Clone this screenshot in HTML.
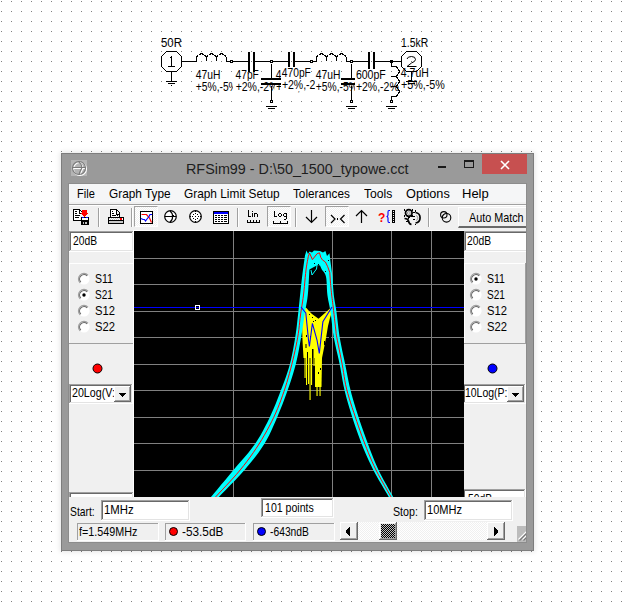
<!DOCTYPE html>
<html><head><meta charset="utf-8">
<style>
html,body{margin:0;padding:0;width:631px;height:610px;overflow:hidden;background:#fff;}
body{position:relative;font-family:"Liberation Sans",sans-serif;}
.a{position:absolute;}
.t{position:absolute;white-space:nowrap;line-height:1;}
svg.a{overflow:visible;}
</style></head><body>
<svg class="a" style="left:0;top:0" width="631" height="610"><defs><pattern id="dp" x="0" y="0" width="10" height="10" patternUnits="userSpaceOnUse"><rect x="1" y="1" width="1" height="1" fill="#808080"/></pattern></defs><rect x="0" y="0" width="631" height="610" fill="url(#dp)"/></svg>
<div class="t" id="s_50r" style="left:161px;top:36.84px;font-size:12px;color:#000;font-family:'Liberation Sans',sans-serif;transform:scaleX(0.9500);transform-origin:0 0;">50R</div>
<svg class="a" style="left:0;top:0" width="631" height="120" shape-rendering="crispEdges"><polyline points="166.5,51.5 176.5,51.5 181.5,56.5 181.5,66.5 176.5,71.5 166.5,71.5 161.5,66.5 161.5,56.5 166.5,51.5" fill="none" stroke="#000" stroke-width="1"/><polyline points="169.5,58.5 170.5,57.5 171.5,56.5 171.5,66.5" fill="none" stroke="#000" stroke-width="1"/><rect x="168" y="66" width="7" height="1" fill="#000"/><polyline points="171.5,71.5 171.5,81.5" fill="none" stroke="#000" stroke-width="1"/><rect x="166" y="81" width="11" height="1" fill="#000"/><rect x="168" y="83" width="7" height="1" fill="#000"/><rect x="171" y="85" width="1" height="1" fill="#000"/><polyline points="181.5,61.5 196.5,61.5" fill="none" stroke="#000" stroke-width="1"/><polyline points="191.5,61.5 196.5,61.5 196.5,56.5 198.5,55.5 199.5,54.5 201.5,53.5 203.5,54.5 204.5,55.5 206.5,56.5 208.5,55.5 209.5,54.5 211.5,53.5 213.5,54.5 214.5,55.5 216.5,56.5 218.5,55.5 219.5,54.5 221.5,53.5 223.5,54.5 224.5,55.5 226.5,56.5" fill="none" stroke="#000" stroke-width="1"/><polyline points="226.5,56.5 226.5,61.5 231.5,61.5" fill="none" stroke="#000" stroke-width="1"/><rect x="206" y="56" width="1" height="5" fill="#000"/><rect x="216" y="56" width="1" height="5" fill="#000"/><rect x="230" y="60" width="3" height="3" fill="#000"/><rect x="231" y="61" width="1" height="1" fill="#fff"/><polyline points="231.5,61.5 248.5,61.5" fill="none" stroke="#000" stroke-width="1"/><polyline points="254.5,61.5 271.5,61.5" fill="none" stroke="#000" stroke-width="1"/><rect x="270" y="60" width="3" height="3" fill="#000"/><rect x="271" y="61" width="1" height="1" fill="#fff"/></svg>
<div class="t" id="s_l1a" style="left:195px;top:68.84px;font-size:12px;color:#000;font-family:'Liberation Sans',sans-serif;background:#fff;transform:scaleX(0.8571);transform-origin:0 0;padding-left:1px;">47uH</div>
<div class="t" id="s_l1b" style="left:195px;top:80.84px;font-size:12px;color:#000;font-family:'Liberation Sans',sans-serif;background:#fff;transform:scaleX(0.8542);transform-origin:0 0;padding-left:1px;">+5%,-5%</div>
<div class="t" id="s_c1a" style="left:233px;top:68.84px;font-size:12px;color:#000;font-family:'Liberation Sans',sans-serif;background:#fff;transform:scaleX(0.8519);transform-origin:0 0;padding-left:3px;">47pF</div>
<div class="t" id="s_c1b" style="left:233px;top:80.84px;font-size:12px;color:#000;font-family:'Liberation Sans',sans-serif;background:#fff;transform:scaleX(0.8750);transform-origin:0 0;padding-left:3px;">+2%,-2%</div>
<svg class="a" style="left:0;top:0" width="631" height="120" shape-rendering="crispEdges"><rect x="248" y="52" width="2" height="20" fill="#000"/><rect x="253" y="52" width="2" height="20" fill="#000"/></svg>
<svg class="a" style="left:0;top:0" width="631" height="120" shape-rendering="crispEdges"><polyline points="271.5,61.5 288.5,61.5" fill="none" stroke="#000" stroke-width="1"/><rect x="288" y="52" width="2" height="20" fill="#000"/><rect x="293" y="52" width="2" height="20" fill="#000"/><polyline points="294.5,61.5 311.5,61.5" fill="none" stroke="#000" stroke-width="1"/><rect x="310" y="60" width="3" height="3" fill="#000"/><rect x="311" y="61" width="1" height="1" fill="#fff"/></svg>
<div class="t" id="s_c3a" style="left:275px;top:68.84px;font-size:12px;color:#000;font-family:'Liberation Sans',sans-serif;background:#fff;transform:scaleX(0.8529);transform-origin:0 0;padding-left:1px;">470pF</div>
<div class="t" id="s_c3b" style="left:275px;top:80.84px;font-size:12px;color:#000;font-family:'Liberation Sans',sans-serif;background:#fff;transform:scaleX(0.8750);transform-origin:0 0;padding-left:1px;">+2%,-2%</div>
<svg class="a" style="left:0;top:0" width="631" height="120" shape-rendering="crispEdges"><polyline points="271.5,63.5 271.5,78.5" fill="none" stroke="#000" stroke-width="1"/><polyline points="271.5,85.5 271.5,101.5" fill="none" stroke="#000" stroke-width="1"/><rect x="270" y="100" width="3" height="3" fill="#000"/><rect x="271" y="101" width="1" height="1" fill="#fff"/><rect x="270" y="60" width="3" height="3" fill="#000"/><rect x="271" y="61" width="1" height="1" fill="#fff"/><rect x="266" y="106" width="11" height="1" fill="#000"/><rect x="268" y="108" width="7" height="1" fill="#000"/><rect x="261" y="83" width="20" height="2" fill="#000"/></svg>
<div class="t" id="s_c2a" style="left:281px;top:66.84px;font-size:12px;color:#000;font-family:'Liberation Sans',sans-serif;background:#fff;transform:scaleX(0.8529);transform-origin:0 0;padding-left:1px;">470pF</div>
<div class="t" id="s_c2b" style="left:281px;top:78.84px;font-size:12px;color:#000;font-family:'Liberation Sans',sans-serif;background:#fff;transform:scaleX(0.8750);transform-origin:0 0;padding-left:1px;">+2%,-2%</div>
<svg class="a" style="left:0;top:0" width="631" height="120" shape-rendering="crispEdges"><rect x="261" y="78" width="20" height="2" fill="#000"/></svg>
<svg class="a" style="left:0;top:0" width="631" height="120" shape-rendering="crispEdges"><polyline points="311.5,61.5 316.5,61.5 316.5,56.5 318.5,55.5 319.5,54.5 321.5,53.5 323.5,54.5 324.5,55.5 326.5,56.5 328.5,55.5 329.5,54.5 331.5,53.5 333.5,54.5 334.5,55.5 336.5,56.5 338.5,55.5 339.5,54.5 341.5,53.5 343.5,54.5 344.5,55.5 346.5,56.5" fill="none" stroke="#000" stroke-width="1"/><polyline points="346.5,56.5 346.5,61.5 351.5,61.5" fill="none" stroke="#000" stroke-width="1"/><rect x="326" y="56" width="1" height="5" fill="#000"/><rect x="336" y="56" width="1" height="5" fill="#000"/><rect x="310" y="60" width="3" height="3" fill="#000"/><rect x="311" y="61" width="1" height="1" fill="#fff"/><rect x="350" y="60" width="3" height="3" fill="#000"/><rect x="351" y="61" width="1" height="1" fill="#fff"/></svg>
<div class="t" id="s_l2a" style="left:315px;top:68.84px;font-size:12px;color:#000;font-family:'Liberation Sans',sans-serif;background:#fff;transform:scaleX(0.8571);transform-origin:0 0;padding-left:1px;">47uH</div>
<div class="t" id="s_l2b" style="left:315px;top:80.84px;font-size:12px;color:#000;font-family:'Liberation Sans',sans-serif;background:#fff;transform:scaleX(0.8542);transform-origin:0 0;padding-left:1px;">+5%,-5%</div>
<svg class="a" style="left:0;top:0" width="631" height="120" shape-rendering="crispEdges"><polyline points="351.5,63.5 351.5,78.5" fill="none" stroke="#000" stroke-width="1"/><rect x="341" y="78" width="20" height="2" fill="#000"/><rect x="341" y="83" width="20" height="2" fill="#000"/><polyline points="351.5,85.5 351.5,101.5" fill="none" stroke="#000" stroke-width="1"/><rect x="350" y="100" width="3" height="3" fill="#000"/><rect x="351" y="101" width="1" height="1" fill="#fff"/><rect x="350" y="60" width="3" height="3" fill="#000"/><rect x="351" y="61" width="1" height="1" fill="#fff"/><rect x="346" y="106" width="11" height="1" fill="#000"/><rect x="348" y="108" width="7" height="1" fill="#000"/></svg>
<svg class="a" style="left:0;top:0" width="631" height="120" shape-rendering="crispEdges"><polyline points="351.5,61.5 368.5,61.5" fill="none" stroke="#000" stroke-width="1"/><rect x="368" y="52" width="2" height="20" fill="#000"/><rect x="373" y="52" width="2" height="20" fill="#000"/><polyline points="374.5,61.5 401.5,61.5" fill="none" stroke="#000" stroke-width="1"/></svg>
<div class="t" id="s_c5a" style="left:355px;top:68.84px;font-size:12px;color:#000;font-family:'Liberation Sans',sans-serif;background:#fff;transform:scaleX(0.8788);transform-origin:0 0;padding-left:1px;">600pF</div>
<div class="t" id="s_c5b" style="left:355px;top:80.84px;font-size:12px;color:#000;font-family:'Liberation Sans',sans-serif;background:#fff;transform:scaleX(0.8750);transform-origin:0 0;padding-left:1px;">+2%,-2%</div>
<div class="t" id="s_l3a" style="left:400px;top:66.84px;font-size:12px;color:#000;font-family:'Liberation Sans',sans-serif;background:#fff;transform:scaleX(0.8710);transform-origin:0 0;padding-left:1px;">4.7uH</div>
<div class="t" id="s_l3b" style="left:400px;top:78.84px;font-size:12px;color:#000;font-family:'Liberation Sans',sans-serif;background:#fff;transform:scaleX(0.8958);transform-origin:0 0;padding-left:1px;">+5%,-5%</div>
<svg class="a" style="left:0;top:0" width="631" height="120" shape-rendering="crispEdges"><polyline points="391.5,61.5 391.5,66.5 396.5,66.5 397.5,68.5 398.5,69.5 399.5,71.5 398.5,73.5 397.5,74.5 396.5,76.5 397.5,78.5 398.5,79.5 399.5,81.5 398.5,83.5 397.5,84.5 396.5,86.5 397.5,88.5 398.5,89.5 399.5,91.5 398.5,93.5 397.5,94.5 396.5,96.5" fill="none" stroke="#000" stroke-width="1"/><polyline points="396.5,96.5 391.5,96.5 391.5,101.5" fill="none" stroke="#000" stroke-width="1"/><rect x="391" y="76" width="5" height="1" fill="#000"/><rect x="391" y="86" width="5" height="1" fill="#000"/><rect x="390" y="60" width="3" height="3" fill="#000"/><rect x="390" y="100" width="3" height="3" fill="#000"/><rect x="391" y="101" width="1" height="1" fill="#fff"/><rect x="386" y="106" width="11" height="1" fill="#000"/><rect x="388" y="108" width="7" height="1" fill="#000"/></svg>
<div class="t" id="s_15k" style="left:401px;top:36.84px;font-size:12px;color:#000;font-family:'Liberation Sans',sans-serif;transform:scaleX(0.8667);transform-origin:0 0;">1.5kR</div>
<svg class="a" style="left:0;top:0" width="631" height="120" shape-rendering="crispEdges"><polyline points="406.5,51.5 416.5,51.5 421.5,56.5 421.5,66.5 416.5,71.5 406.5,71.5 401.5,66.5 401.5,56.5 406.5,51.5" fill="none" stroke="#000" stroke-width="1"/><path d="M407 59 Q407.5 56.5 411.5 56.5 Q415.5 56.5 415.5 59.5 Q415.5 61.5 411.5 63 L407 66.5 H416.5" fill="none" stroke="#000" stroke-width="1" shape-rendering="auto"/><polyline points="411.5,71.5 411.5,81.5" fill="none" stroke="#000" stroke-width="1"/><rect x="406" y="81" width="11" height="1" fill="#000"/><rect x="408" y="83" width="7" height="1" fill="#000"/></svg>
<div class="a" style="left:61px;top:153px;width:473px;height:398px;box-sizing:border-box;background:#9a9a9a;border:1px solid #7d7d7d;box-shadow:0 0 5px 1px rgba(0,0,0,0.10);"></div>
<svg class="a" style="left:71px;top:160px" width="16" height="16">
<rect x="0" y="0" width="16" height="16" fill="#b4b4b4"/>
<g transform="translate(1,1)" fill="none" stroke="#fff" stroke-width="1.1">
<circle cx="8" cy="8" r="6.5"/><path d="M1.5 7.5 H14.5 M7.5 1.5 Q10.5 4 11 7.5 Q9 11 8 14.5"/></g>
<g fill="none" stroke="#7a7a7a" stroke-width="1.1">
<circle cx="8" cy="8" r="6.5"/><path d="M1.5 7.5 H14.5 M7.5 1.5 Q10.5 4 11 7.5 Q9 11 8 14.5"/></g>
</svg>
<div class="t" id="title" style="left:186px;top:161.30px;font-size:15px;color:#1e1e1e;font-family:'Liberation Sans',sans-serif;transform:scaleX(0.9569);transform-origin:0 0;">RFSim99 - D:\50_1500_typowe.cct</div>
<div class="a" style="left:438px;top:166px;width:8px;height:2px;background:#1a1a1a;"></div>
<div class="a" style="left:464px;top:160px;width:10px;height:8px;box-sizing:border-box;border:1px solid #1a1a1a;border-top-width:2px;"></div>
<div class="a" style="left:482px;top:154px;width:45px;height:20px;background:#c75050;"></div>
<svg class="a" style="left:482px;top:154px" width="45" height="20"><path d="M19 7 L27 15 M27 7 L19 15" stroke="#fff" stroke-width="1.6"/></svg>
<div class="a" style="left:68px;top:183px;width:459px;height:360px;background:#8c8c8c;"></div>
<div class="a" style="left:0;top:0;width:631px;height:610px;clip-path:inset(184px 105px 68px 69px)">
<div class="a" style="left:69px;top:184px;width:457px;height:358px;background:#f0f0f0;"></div>
<div class="a" style="left:69px;top:184px;width:457px;height:18px;background:#f5f6f7;"></div>
<div class="a" style="left:69px;top:204px;width:457px;height:1px;background:#a0a0a0;"></div>
<div class="a" style="left:69px;top:205px;width:457px;height:1px;background:#ffffff;"></div>
<div class="t" id="m_file" style="left:77px;top:187.00px;font-size:13px;color:#000;font-family:'Liberation Sans',sans-serif;transform:scaleX(0.8500);transform-origin:0 0;">File</div>
<div class="t" id="m_gt" style="left:109px;top:187.00px;font-size:13px;color:#000;font-family:'Liberation Sans',sans-serif;transform:scaleX(0.9091);transform-origin:0 0;">Graph Type</div>
<div class="t" id="m_gls" style="left:184px;top:187.00px;font-size:13px;color:#000;font-family:'Liberation Sans',sans-serif;transform:scaleX(0.9126);transform-origin:0 0;">Graph Limit Setup</div>
<div class="t" id="m_tol" style="left:293px;top:187.00px;font-size:13px;color:#000;font-family:'Liberation Sans',sans-serif;transform:scaleX(0.9032);transform-origin:0 0;">Tolerances</div>
<div class="t" id="m_tools" style="left:364px;top:187.00px;font-size:13px;color:#000;font-family:'Liberation Sans',sans-serif;transform:scaleX(0.9333);transform-origin:0 0;">Tools</div>
<div class="t" id="m_opt" style="left:406px;top:187.00px;font-size:13px;color:#000;font-family:'Liberation Sans',sans-serif;transform:scaleX(0.9767);transform-origin:0 0;">Options</div>
<div class="t" id="m_help" style="left:462px;top:187.00px;font-size:13px;color:#000;font-family:'Liberation Sans',sans-serif;">Help</div>
<div class="a" style="left:98px;top:208px;width:1px;height:19px;background:#a0a0a0;"></div>
<div class="a" style="left:99px;top:208px;width:1px;height:19px;background:#ffffff;"></div>
<div class="a" style="left:131px;top:208px;width:1px;height:19px;background:#a0a0a0;"></div>
<div class="a" style="left:132px;top:208px;width:1px;height:19px;background:#ffffff;"></div>
<div class="a" style="left:237px;top:208px;width:1px;height:19px;background:#a0a0a0;"></div>
<div class="a" style="left:238px;top:208px;width:1px;height:19px;background:#ffffff;"></div>
<div class="a" style="left:295px;top:208px;width:1px;height:19px;background:#a0a0a0;"></div>
<div class="a" style="left:296px;top:208px;width:1px;height:19px;background:#ffffff;"></div>
<div class="a" style="left:428px;top:208px;width:1px;height:19px;background:#a0a0a0;"></div>
<div class="a" style="left:429px;top:208px;width:1px;height:19px;background:#ffffff;"></div>
<div class="a" style="left:134px;top:206px;width:24px;height:21px;box-sizing:border-box;border-top:1px solid #a0a0a0;border-left:1px solid #a0a0a0;border-right:1px solid #fff;border-bottom:1px solid #fff;background-color:#f0f0f0;background-image:linear-gradient(45deg,#fff 25%,transparent 25%,transparent 75%,#fff 75%),linear-gradient(45deg,#fff 25%,transparent 25%,transparent 75%,#fff 75%);background-size:2px 2px;background-position:0 0,1px 1px;"></div>
<div class="a" style="left:267px;top:206px;width:24px;height:21px;box-sizing:border-box;border-top:1px solid #a0a0a0;border-left:1px solid #a0a0a0;border-right:1px solid #fff;border-bottom:1px solid #fff;background-color:#f0f0f0;background-image:linear-gradient(45deg,#fff 25%,transparent 25%,transparent 75%,#fff 75%),linear-gradient(45deg,#fff 25%,transparent 25%,transparent 75%,#fff 75%);background-size:2px 2px;background-position:0 0,1px 1px;"></div>
<div class="a" style="left:325px;top:206px;width:24px;height:21px;box-sizing:border-box;border-top:1px solid #a0a0a0;border-left:1px solid #a0a0a0;border-right:1px solid #fff;border-bottom:1px solid #fff;background-color:#f0f0f0;background-image:linear-gradient(45deg,#fff 25%,transparent 25%,transparent 75%,#fff 75%),linear-gradient(45deg,#fff 25%,transparent 25%,transparent 75%,#fff 75%);background-size:2px 2px;background-position:0 0,1px 1px;"></div>
<svg class="a" style="left:73px;top:209px" width="16" height="16" shape-rendering="crispEdges"><rect x="0" y="0" width="7" height="1" fill="#000"/><rect x="0" y="0" width="1" height="12" fill="#000"/><rect x="0" y="11" width="8" height="1" fill="#000"/><rect x="1" y="1" width="6" height="10" fill="#fff"/><rect x="7" y="1" width="1" height="1" fill="#000"/><rect x="8" y="2" width="1" height="1" fill="#000"/><rect x="6" y="1" width="1" height="4" fill="#000"/><rect x="6" y="4" width="3" height="1" fill="#000"/><rect x="7" y="2" width="1" height="2" fill="#fff"/><rect x="2" y="2" width="2" height="1" fill="#000"/><rect x="2" y="4" width="2" height="1" fill="#000"/><rect x="2" y="6" width="4" height="1" fill="#000"/><rect x="6" y="6" width="1" height="1" fill="#000"/><rect x="2" y="8" width="2" height="1" fill="#000"/><rect x="4" y="8" width="2" height="1" fill="#000"/><rect x="1" y="5" width="7" height="1" fill="#fff"/><rect x="9" y="1" width="5" height="3" fill="#f00"/><rect x="10" y="4" width="3" height="1" fill="#f00"/><rect x="8" y="4" width="7" height="1" fill="#f00"/><rect x="9" y="5" width="5" height="1" fill="#f00"/><rect x="10" y="6" width="3" height="1" fill="#f00"/><rect x="11" y="7" width="1" height="1" fill="#f00"/><rect x="8" y="8" width="8" height="8" fill="#000"/><rect x="9" y="8" width="2" height="1" fill="#00f"/><rect x="13" y="8" width="2" height="1" fill="#00f"/><rect x="9" y="9" width="6" height="2" fill="#fff"/><rect x="10" y="13" width="4" height="2" fill="#c0c0c0"/><rect x="11" y="13" width="1" height="2" fill="#000"/></svg>
<svg class="a" style="left:108px;top:209px" width="16" height="16" shape-rendering="crispEdges"><rect x="2" y="0" width="7" height="1" fill="#000"/><rect x="2" y="0" width="1" height="8" fill="#000"/><rect x="3" y="1" width="6" height="7" fill="#fff"/><rect x="9" y="1" width="1" height="1" fill="#000"/><rect x="10" y="2" width="1" height="1" fill="#000"/><rect x="11" y="3" width="1" height="1" fill="#000"/><rect x="11" y="4" width="1" height="4" fill="#000"/><rect x="9" y="5" width="2" height="2" fill="#fff"/><rect x="8" y="1" width="1" height="4" fill="#000"/><rect x="8" y="5" width="3" height="1" fill="#000"/><rect x="4" y="2" width="1" height="1" fill="#000"/><rect x="4" y="4" width="2" height="1" fill="#000"/><rect x="4" y="6" width="4" height="1" fill="#000"/><rect x="9" y="6" width="1" height="1" fill="#000"/><rect x="0" y="8" width="16" height="1" fill="#000"/><rect x="0" y="8" width="1" height="7" fill="#000"/><rect x="15" y="8" width="1" height="7" fill="#000"/><rect x="1" y="9" width="14" height="2" fill="#fff"/><rect x="1" y="9" width="1" height="1" fill="#c8c8c8"/><rect x="2" y="10" width="1" height="1" fill="#c8c8c8"/><rect x="3" y="9" width="1" height="1" fill="#c8c8c8"/><rect x="4" y="10" width="1" height="1" fill="#c8c8c8"/><rect x="5" y="9" width="1" height="1" fill="#c8c8c8"/><rect x="6" y="10" width="1" height="1" fill="#c8c8c8"/><rect x="7" y="9" width="1" height="1" fill="#c8c8c8"/><rect x="8" y="10" width="1" height="1" fill="#c8c8c8"/><rect x="9" y="9" width="1" height="1" fill="#c8c8c8"/><rect x="10" y="10" width="1" height="1" fill="#c8c8c8"/><rect x="11" y="9" width="1" height="1" fill="#c8c8c8"/><rect x="12" y="10" width="1" height="1" fill="#c8c8c8"/><rect x="12" y="9" width="2" height="2" fill="#f00"/><rect x="0" y="11" width="16" height="1" fill="#000"/><rect x="1" y="12" width="14" height="2" fill="#c8c8c8"/><rect x="1" y="14" width="14" height="1" fill="#000"/></svg>
<svg class="a" style="left:140px;top:211px" width="13" height="13" shape-rendering="crispEdges"><rect x="0" y="0" width="13" height="13" fill="#000"/><rect x="1" y="1" width="11" height="11" fill="#fff"/><polyline points="1.5,3.5 6.5,3.5 9.5,7 11.5,11.5" fill="none" stroke="#f00" stroke-width="1.2" shape-rendering="auto"/><polyline points="1,7.5 3,8.5 4.5,8.5 5.5,10 7,8 9,5.5 10,3.5 12,3.5" fill="none" stroke="#00f" stroke-width="1.2" shape-rendering="auto"/></svg>
<svg class="a" style="left:164px;top:210px" width="13" height="13" shape-rendering="crispEdges"><circle cx="6.5" cy="6.5" r="5.8" fill="#fff" stroke="#000" stroke-width="1.2" shape-rendering="auto"/><rect x="1" y="6" width="11" height="1" fill="#000"/><rect x="8" y="5" width="2" height="2" fill="#000"/><path d="M6 1 Q9 3.5 8.5 6.5 Q9 9.5 6 12" fill="none" stroke="#000" stroke-width="1.1" shape-rendering="auto"/></svg>
<svg class="a" style="left:189px;top:210px" width="13" height="13" shape-rendering="crispEdges"><circle cx="6.5" cy="6.5" r="5.8" fill="#fff" stroke="#000" stroke-width="1.2" shape-rendering="auto"/><rect x="6" y="3" width="1" height="1" fill="#000"/><rect x="4" y="4" width="1" height="1" fill="#000"/><rect x="8" y="4" width="1" height="1" fill="#000"/><rect x="3" y="6" width="1" height="1" fill="#000"/><rect x="6" y="6" width="1" height="1" fill="#000"/><rect x="9" y="6" width="1" height="1" fill="#000"/><rect x="4" y="8" width="1" height="1" fill="#000"/><rect x="8" y="8" width="1" height="1" fill="#000"/><rect x="6" y="9" width="1" height="1" fill="#000"/><rect x="6" y="1" width="1" height="1" fill="#000"/><rect x="6" y="11" width="1" height="1" fill="#000"/><rect x="1" y="6" width="1" height="1" fill="#000"/><rect x="11" y="6" width="1" height="1" fill="#000"/></svg>
<svg class="a" style="left:213px;top:211px" width="16" height="13" shape-rendering="crispEdges"><rect x="0" y="0" width="16" height="13" fill="#000"/><rect x="1" y="1" width="14" height="2" fill="#00f"/><rect x="1" y="3" width="14" height="9" fill="#fff"/><rect x="2" y="4" width="2" height="1" fill="#000"/><rect x="5" y="4" width="2" height="1" fill="#000"/><rect x="8" y="4" width="2" height="1" fill="#000"/><rect x="11" y="4" width="3" height="1" fill="#000"/><rect x="2" y="6" width="2" height="1" fill="#000"/><rect x="5" y="6" width="2" height="1" fill="#000"/><rect x="8" y="6" width="2" height="1" fill="#000"/><rect x="11" y="6" width="3" height="1" fill="#000"/><rect x="2" y="8" width="2" height="1" fill="#000"/><rect x="5" y="8" width="2" height="1" fill="#000"/><rect x="8" y="8" width="2" height="1" fill="#000"/><rect x="11" y="8" width="3" height="1" fill="#000"/><rect x="2" y="10" width="2" height="1" fill="#000"/><rect x="5" y="10" width="2" height="1" fill="#000"/><rect x="8" y="10" width="2" height="1" fill="#000"/><rect x="11" y="10" width="3" height="1" fill="#000"/></svg>
<svg class="a" style="left:247px;top:210px" width="14" height="14" shape-rendering="crispEdges"><rect x="1" y="0" width="1" height="7" fill="#000"/><rect x="1" y="6" width="3" height="1" fill="#000"/><rect x="5" y="1" width="1" height="1" fill="#000"/><rect x="5" y="3" width="1" height="4" fill="#000"/><rect x="7" y="3" width="1" height="4" fill="#000"/><rect x="8" y="3" width="2" height="1" fill="#000"/><rect x="10" y="4" width="1" height="3" fill="#000"/><rect x="0" y="12" width="13" height="1" fill="#000"/><rect x="0" y="10" width="1" height="2" fill="#000"/><rect x="3" y="10" width="1" height="2" fill="#000"/><rect x="6" y="10" width="1" height="2" fill="#000"/><rect x="9" y="10" width="1" height="2" fill="#000"/><rect x="12" y="10" width="1" height="2" fill="#000"/></svg>
<svg class="a" style="left:273px;top:211px" width="15" height="14" shape-rendering="crispEdges"><rect x="1" y="0" width="1" height="6" fill="#000"/><rect x="1" y="5" width="3" height="1" fill="#000"/><rect x="6" y="2" width="2" height="1" fill="#000"/><rect x="5" y="3" width="1" height="2" fill="#000"/><rect x="8" y="3" width="1" height="2" fill="#000"/><rect x="6" y="5" width="2" height="1" fill="#000"/><rect x="11" y="2" width="2" height="1" fill="#000"/><rect x="10" y="3" width="1" height="2" fill="#000"/><rect x="13" y="2" width="1" height="6" fill="#000"/><rect x="11" y="5" width="2" height="1" fill="#000"/><rect x="11" y="8" width="2" height="1" fill="#000"/><rect x="0" y="12" width="15" height="1" fill="#000"/><rect x="0" y="10" width="1" height="2" fill="#000"/><rect x="7" y="10" width="1" height="2" fill="#000"/><rect x="14" y="10" width="1" height="2" fill="#000"/></svg>
<svg class="a" style="left:305px;top:209px" width="13" height="15" shape-rendering="crispEdges"><path d="M6.5 1 V13.5 M1 8 L6.5 13.5 L12 8" fill="none" stroke="#000" stroke-width="1.2" shape-rendering="auto"/></svg>
<svg class="a" style="left:330px;top:214px" width="16" height="10" shape-rendering="crispEdges"><path d="M1 1 L5 5 L1 9 M14.5 1 L10.5 5 L14.5 9" fill="none" stroke="#000" stroke-width="1.2" shape-rendering="auto"/><rect x="7" y="4" width="1" height="2" fill="#000"/></svg>
<svg class="a" style="left:355px;top:209px" width="13" height="15" shape-rendering="crispEdges"><path d="M6.5 14 V1.5 M1 7 L6.5 1.5 L12 7" fill="none" stroke="#000" stroke-width="1.2" shape-rendering="auto"/></svg>
<svg class="a" style="left:378px;top:210px" width="18" height="14" shape-rendering="crispEdges"><text x="0" y="12" font-family="Liberation Sans" font-weight="bold" font-size="12" fill="#f00">?</text><path d="M12 0.5 H11 Q10 0.5 10 2 V5 Q10 6.5 8.5 6.5 Q10 6.5 10 8 V11 Q10 12.5 11 12.5 H12" fill="none" stroke="#00f" stroke-width="1.1" shape-rendering="auto"/><rect x="14" y="0" width="3" height="1" fill="#000"/><rect x="14" y="2" width="3" height="1" fill="#000"/><rect x="14" y="4" width="3" height="1" fill="#000"/><rect x="14" y="6" width="3" height="1" fill="#000"/><rect x="14" y="8" width="3" height="1" fill="#000"/><rect x="14" y="10" width="3" height="1" fill="#000"/><rect x="14" y="12" width="3" height="1" fill="#000"/><rect x="14" y="0" width="1" height="13" fill="#000"/><rect x="16" y="0" width="1" height="13" fill="#000"/></svg>
<svg class="a" style="left:404px;top:209px" width="17" height="16" shape-rendering="crispEdges"><g shape-rendering="auto" fill="none"><circle cx="4.8" cy="4" r="3.3" stroke="#000" stroke-width="1.7"/><circle cx="4.8" cy="4" r="1.4" stroke="#909090" stroke-width="0.9"/><path d="M11.5 3.5 A5.3 5.3 0 0 1 11.5 14" stroke="#000" stroke-width="1.7"/><path d="M12 6.5 A2.6 2.6 0 0 1 12 11.5" stroke="#909090" stroke-width="0.9"/><path d="M0.5 9.5 Q4 9.5 4.5 12 Q5 15 7.5 15.5" stroke="#000" stroke-width="1.7"/></g><rect x="0" y="0" width="1" height="2" fill="#000"/><rect x="8" y="0" width="1" height="2" fill="#000"/><rect x="0" y="6" width="1" height="2" fill="#000"/><rect x="9" y="3" width="2" height="1" fill="#000"/><rect x="4" y="8" width="2" height="1" fill="#000"/><rect x="7" y="6" width="2" height="2" fill="#000"/><rect x="11" y="1" width="1" height="2" fill="#000"/><rect x="9" y="7" width="2" height="1" fill="#000"/><rect x="9" y="10" width="2" height="1" fill="#000"/><rect x="11" y="15" width="1" height="1" fill="#000"/><rect x="2" y="12" width="2" height="1" fill="#000"/><rect x="4" y="9" width="1" height="1" fill="#000"/></svg>
<svg class="a" style="left:440px;top:211px" width="12" height="12" shape-rendering="crispEdges"><circle cx="3.8" cy="3.8" r="3.2" fill="none" stroke="#000" stroke-width="1.1" shape-rendering="auto"/><circle cx="6.5" cy="6.8" r="4.3" fill="none" stroke="#000" stroke-width="1.1" shape-rendering="auto"/></svg>
<div class="a" style="left:458px;top:207px;width:68px;height:21px;box-sizing:border-box;background:#f0f0f0;border-top:1px solid #fff;border-left:1px solid #fff;border-bottom:2px solid #696969;"></div>
<div class="t" id="t_auto" style="left:469px;top:211.00px;font-size:13px;color:#000;font-family:'Liberation Sans',sans-serif;transform:scaleX(0.8308);transform-origin:0 0;">Auto Match</div>
<div class="a" style="left:69px;top:231px;width:65px;height:21px;background:#fff;"></div>
<div class="a" style="left:69px;top:231px;width:64px;height:20px;background:#a0a0a0;"></div>
<div class="a" style="left:70px;top:232px;width:63px;height:19px;background:#e3e3e3;"></div>
<div class="a" style="left:70px;top:232px;width:62px;height:18px;background:#696969;"></div>
<div class="a" style="left:71px;top:233px;width:61px;height:17px;background:#fff;"></div>
<div class="t" id="t_l20" style="left:73px;top:234.00px;font-size:13px;color:#000;font-family:'Liberation Sans',sans-serif;transform:scaleX(0.7931);transform-origin:0 0;">20dB</div>
<div class="a" style="left:69px;top:263px;width:65px;height:81px;background:#a0a0a0;"></div>
<div class="a" style="left:69px;top:263px;width:64px;height:80px;background:#fff;"></div>
<div class="a" style="left:70px;top:264px;width:63px;height:79px;background:#f0f0f0;"></div>
<svg class="a" style="left:78px;top:273px" width="12" height="12"><circle cx="6" cy="6" r="5.6" fill="#fff"/><path d="M2.04 9.96 A5.6 5.6 0 0 1 9.96 2.04" fill="none" stroke="#a0a0a0" stroke-width="1.1"/><path d="M2.82 9.18 A4.5 4.5 0 0 1 9.18 2.82" fill="none" stroke="#696969" stroke-width="1.1"/></svg>
<div class="t" id="t_ls0" style="left:95px;top:272.00px;font-size:13px;color:#000;font-family:'Liberation Sans',sans-serif;transform:scaleX(0.8095);transform-origin:0 0;">S11</div>
<svg class="a" style="left:78px;top:289px" width="12" height="12"><circle cx="6" cy="6" r="5.6" fill="#fff"/><path d="M2.04 9.96 A5.6 5.6 0 0 1 9.96 2.04" fill="none" stroke="#a0a0a0" stroke-width="1.1"/><path d="M2.82 9.18 A4.5 4.5 0 0 1 9.18 2.82" fill="none" stroke="#696969" stroke-width="1.1"/><circle cx="6" cy="6" r="1.7" fill="#000"/></svg>
<div class="t" id="t_ls1" style="left:95px;top:288.00px;font-size:13px;color:#000;font-family:'Liberation Sans',sans-serif;transform:scaleX(0.7727);transform-origin:0 0;">S21</div>
<svg class="a" style="left:78px;top:305px" width="12" height="12"><circle cx="6" cy="6" r="5.6" fill="#fff"/><path d="M2.04 9.96 A5.6 5.6 0 0 1 9.96 2.04" fill="none" stroke="#a0a0a0" stroke-width="1.1"/><path d="M2.82 9.18 A4.5 4.5 0 0 1 9.18 2.82" fill="none" stroke="#696969" stroke-width="1.1"/></svg>
<div class="t" id="t_ls2" style="left:95px;top:304.00px;font-size:13px;color:#000;font-family:'Liberation Sans',sans-serif;transform:scaleX(0.8636);transform-origin:0 0;">S12</div>
<svg class="a" style="left:78px;top:321px" width="12" height="12"><circle cx="6" cy="6" r="5.6" fill="#fff"/><path d="M2.04 9.96 A5.6 5.6 0 0 1 9.96 2.04" fill="none" stroke="#a0a0a0" stroke-width="1.1"/><path d="M2.82 9.18 A4.5 4.5 0 0 1 9.18 2.82" fill="none" stroke="#696969" stroke-width="1.1"/></svg>
<div class="t" id="t_ls3" style="left:95px;top:320.00px;font-size:13px;color:#000;font-family:'Liberation Sans',sans-serif;transform:scaleX(0.8636);transform-origin:0 0;">S22</div>
<svg class="a" style="left:92px;top:363px" width="11" height="11"><circle cx="5.5" cy="5.5" r="4.5" fill="#f00" stroke="#000" stroke-width="1"/></svg>
<div class="a" style="left:69px;top:384px;width:64px;height:20px;background:#fff;"></div>
<div class="a" style="left:69px;top:384px;width:63px;height:19px;background:#a0a0a0;"></div>
<div class="a" style="left:70px;top:385px;width:62px;height:18px;background:#e3e3e3;"></div>
<div class="a" style="left:70px;top:385px;width:61px;height:17px;background:#696969;"></div>
<div class="a" style="left:71px;top:386px;width:60px;height:16px;background:#fff;"></div>
<div class="a" style="left:71px;top:386px;width:43px;height:16px;overflow:hidden;">
<div class="t" id="t_ldd" style="left:1px;top:-0.00px;font-size:13px;color:#000;font-family:'Liberation Sans',sans-serif;transform:scaleX(0.8200);transform-origin:0 0;">20Log(V:</div>
</div>
<div class="a" style="left:114px;top:386px;width:17px;height:16px;background:#696969;"></div>
<div class="a" style="left:114px;top:386px;width:16px;height:15px;background:#fff;"></div>
<div class="a" style="left:115px;top:387px;width:15px;height:14px;background:#a0a0a0;"></div>
<div class="a" style="left:115px;top:387px;width:14px;height:13px;background:#f0f0f0;"></div>
<svg class="a" style="left:119px;top:393px" width="7" height="4" shape-rendering="crispEdges"><rect x="0" y="0" width="7" height="1"/><rect x="1" y="1" width="5" height="1"/><rect x="2" y="2" width="3" height="1"/><rect x="3" y="3" width="1" height="1"/></svg>
<div class="a" style="left:69px;top:492px;width:65px;height:21px;background:#fff;"></div>
<div class="a" style="left:69px;top:492px;width:64px;height:20px;background:#a0a0a0;"></div>
<div class="a" style="left:70px;top:493px;width:63px;height:19px;background:#e3e3e3;"></div>
<div class="a" style="left:70px;top:493px;width:62px;height:18px;background:#696969;"></div>
<div class="a" style="left:71px;top:494px;width:61px;height:17px;background:#fff;"></div>
<div class="a" style="left:464px;top:231px;width:64px;height:21px;background:#fff;"></div>
<div class="a" style="left:464px;top:231px;width:63px;height:20px;background:#a0a0a0;"></div>
<div class="a" style="left:465px;top:232px;width:62px;height:19px;background:#e3e3e3;"></div>
<div class="a" style="left:465px;top:232px;width:61px;height:18px;background:#696969;"></div>
<div class="a" style="left:466px;top:233px;width:60px;height:17px;background:#fff;"></div>
<div class="t" id="t_r20" style="left:467px;top:234.00px;font-size:13px;color:#000;font-family:'Liberation Sans',sans-serif;transform:scaleX(0.7931);transform-origin:0 0;">20dB</div>
<div class="a" style="left:464px;top:263px;width:62px;height:81px;background:#a0a0a0;"></div>
<div class="a" style="left:464px;top:263px;width:61px;height:80px;background:#fff;"></div>
<div class="a" style="left:465px;top:264px;width:60px;height:79px;background:#f0f0f0;"></div>
<svg class="a" style="left:470px;top:273px" width="12" height="12"><circle cx="6" cy="6" r="5.6" fill="#fff"/><path d="M2.04 9.96 A5.6 5.6 0 0 1 9.96 2.04" fill="none" stroke="#a0a0a0" stroke-width="1.1"/><path d="M2.82 9.18 A4.5 4.5 0 0 1 9.18 2.82" fill="none" stroke="#696969" stroke-width="1.1"/><circle cx="6" cy="6" r="1.7" fill="#000"/></svg>
<div class="t" id="t_rs0" style="left:487px;top:272.00px;font-size:13px;color:#000;font-family:'Liberation Sans',sans-serif;transform:scaleX(0.8095);transform-origin:0 0;">S11</div>
<svg class="a" style="left:470px;top:289px" width="12" height="12"><circle cx="6" cy="6" r="5.6" fill="#fff"/><path d="M2.04 9.96 A5.6 5.6 0 0 1 9.96 2.04" fill="none" stroke="#a0a0a0" stroke-width="1.1"/><path d="M2.82 9.18 A4.5 4.5 0 0 1 9.18 2.82" fill="none" stroke="#696969" stroke-width="1.1"/></svg>
<div class="t" id="t_rs1" style="left:487px;top:288.00px;font-size:13px;color:#000;font-family:'Liberation Sans',sans-serif;transform:scaleX(0.7727);transform-origin:0 0;">S21</div>
<svg class="a" style="left:470px;top:305px" width="12" height="12"><circle cx="6" cy="6" r="5.6" fill="#fff"/><path d="M2.04 9.96 A5.6 5.6 0 0 1 9.96 2.04" fill="none" stroke="#a0a0a0" stroke-width="1.1"/><path d="M2.82 9.18 A4.5 4.5 0 0 1 9.18 2.82" fill="none" stroke="#696969" stroke-width="1.1"/></svg>
<div class="t" id="t_rs2" style="left:487px;top:304.00px;font-size:13px;color:#000;font-family:'Liberation Sans',sans-serif;transform:scaleX(0.8636);transform-origin:0 0;">S12</div>
<svg class="a" style="left:470px;top:321px" width="12" height="12"><circle cx="6" cy="6" r="5.6" fill="#fff"/><path d="M2.04 9.96 A5.6 5.6 0 0 1 9.96 2.04" fill="none" stroke="#a0a0a0" stroke-width="1.1"/><path d="M2.82 9.18 A4.5 4.5 0 0 1 9.18 2.82" fill="none" stroke="#696969" stroke-width="1.1"/></svg>
<div class="t" id="t_rs3" style="left:487px;top:320.00px;font-size:13px;color:#000;font-family:'Liberation Sans',sans-serif;transform:scaleX(0.8636);transform-origin:0 0;">S22</div>
<svg class="a" style="left:487px;top:363px" width="11" height="11"><circle cx="5.5" cy="5.5" r="4.5" fill="#00f" stroke="#000" stroke-width="1"/></svg>
<div class="a" style="left:463px;top:384px;width:63px;height:20px;background:#fff;"></div>
<div class="a" style="left:463px;top:384px;width:62px;height:19px;background:#a0a0a0;"></div>
<div class="a" style="left:464px;top:385px;width:61px;height:18px;background:#e3e3e3;"></div>
<div class="a" style="left:464px;top:385px;width:60px;height:17px;background:#696969;"></div>
<div class="a" style="left:465px;top:386px;width:59px;height:16px;background:#fff;"></div>
<div class="a" style="left:465px;top:386px;width:42px;height:16px;overflow:hidden;">
<div class="t" id="t_rdd" style="left:0px;top:-0.00px;font-size:13px;color:#000;font-family:'Liberation Sans',sans-serif;transform:scaleX(0.8039);transform-origin:0 0;">10Log(P:</div>
</div>
<div class="a" style="left:507px;top:386px;width:17px;height:16px;background:#696969;"></div>
<div class="a" style="left:507px;top:386px;width:16px;height:15px;background:#fff;"></div>
<div class="a" style="left:508px;top:387px;width:15px;height:14px;background:#a0a0a0;"></div>
<div class="a" style="left:508px;top:387px;width:14px;height:13px;background:#f0f0f0;"></div>
<svg class="a" style="left:512px;top:393px" width="7" height="4" shape-rendering="crispEdges"><rect x="0" y="0" width="7" height="1"/><rect x="1" y="1" width="5" height="1"/><rect x="2" y="2" width="3" height="1"/><rect x="3" y="3" width="1" height="1"/></svg>
<div class="a" style="left:463px;top:489px;width:63px;height:21px;background:#fff;"></div>
<div class="a" style="left:463px;top:489px;width:62px;height:20px;background:#a0a0a0;"></div>
<div class="a" style="left:464px;top:490px;width:61px;height:19px;background:#e3e3e3;"></div>
<div class="a" style="left:464px;top:490px;width:60px;height:18px;background:#696969;"></div>
<div class="a" style="left:465px;top:491px;width:59px;height:17px;background:#fff;"></div>
<div class="a" style="left:465px;top:491px;width:60px;height:6px;overflow:hidden;">
<div class="t" id="t_r50" style="left:3px;top:1.00px;font-size:13px;color:#000;font-family:'Liberation Sans',sans-serif;transform:scaleX(0.7931);transform-origin:0 0;">50dB</div>
</div>
<div class="a" style="left:133px;top:230px;width:331px;height:267px;background:#fff;"></div>
<svg class="a" style="left:134px;top:231px" width="330" height="266" shape-rendering="crispEdges"><rect x="0" y="0" width="330" height="266" fill="#000"/><rect x="99" y="0" width="1" height="266" fill="#808080"/><rect x="198" y="0" width="1" height="266" fill="#808080"/><rect x="257" y="0" width="1" height="266" fill="#808080"/><rect x="297" y="0" width="1" height="266" fill="#808080"/><rect x="0" y="27" width="330" height="1" fill="#808080"/><rect x="0" y="53" width="330" height="1" fill="#808080"/><rect x="0" y="80" width="330" height="1" fill="#808080"/><rect x="0" y="106" width="330" height="1" fill="#808080"/><rect x="0" y="133" width="330" height="1" fill="#808080"/><rect x="0" y="159" width="330" height="1" fill="#808080"/><rect x="0" y="186" width="330" height="1" fill="#808080"/><rect x="0" y="212" width="330" height="1" fill="#808080"/><rect x="0" y="239" width="330" height="1" fill="#808080"/></svg>
<svg class="a" style="left:134px;top:231px" width="330" height="266"><defs><clipPath id="gc"><rect x="0" y="0" width="330" height="266"/></clipPath></defs><g clip-path="url(#gc)"><rect x="0" y="76" width="168" height="1" fill="#0000ff" shape-rendering="crispEdges"/><rect x="197" y="76" width="133" height="1" fill="#0000ff" shape-rendering="crispEdges"/><polygon points="166.50,76.00 169.00,75.50 172.40,77.00 175.00,80.00 178.00,83.00 184.50,87.80 191.00,82.00 196.00,77.50 197.50,75.50 199.50,76.00 196.00,87.00 194.00,95.00 192.00,107.00 190.00,117.00 188.00,127.00 169.50,127.00 168.50,109.00 168.00,94.00" fill="#ffff00"/><polygon points="181.00,127.00 188.00,127.00 187.50,156.00 181.00,156.00" fill="#ffff00"/><rect x="170.5" y="127" width="1.1" height="20" fill="#ffff00"/><rect x="172.0" y="127" width="1.1" height="27" fill="#ffff00"/><rect x="174.0" y="127" width="1.1" height="26" fill="#ffff00"/><rect x="175.5" y="127" width="1.1" height="42" fill="#ffff00"/><rect x="177.0" y="127" width="1.1" height="27" fill="#ffff00"/><rect x="182.5" y="127" width="1.1" height="38" fill="#ffff00"/><rect x="185.5" y="127" width="1.1" height="38" fill="#ffff00"/><rect x="179.5" y="127" width="1.1" height="8" fill="#ffff00"/><rect x="178" y="86" width="1" height="1" fill="#000"/><rect x="181" y="89" width="1" height="1" fill="#000"/><rect x="179" y="90" width="1" height="1" fill="#000"/><rect x="175" y="83" width="1" height="1" fill="#000"/><rect x="172" y="104" width="1" height="2" fill="#000"/><rect x="176" y="105" width="1" height="2" fill="#000"/><rect x="195" y="99" width="2" height="12" fill="#000"/><rect x="193" y="111" width="1" height="6" fill="#000"/><rect x="171.5" y="113" width="1" height="4" fill="#000"/><rect x="178" y="118" width="1.5" height="9" fill="#000"/><rect x="173" y="121" width="1" height="6" fill="#000"/><rect x="190" y="110" width="1" height="4" fill="#000"/><rect x="184" y="141" width="1" height="2" fill="#000"/><rect x="186" y="137" width="1" height="2" fill="#000"/><polygon points="77.00,266.00 79.46,263.05 82.87,258.96 86.91,254.12 91.24,248.93 95.55,243.75 99.50,239.00 103.22,234.62 106.99,230.28 110.74,225.97 114.37,221.67 117.82,217.36 121.00,213.00 123.88,208.61 126.53,204.21 128.99,199.79 131.30,195.35 133.53,190.89 135.70,186.40 137.81,181.86 139.81,177.26 141.72,172.64 143.54,168.03 145.30,163.47 147.00,159.00 148.65,154.65 150.24,150.39 151.77,146.18 153.21,141.97 154.56,137.73 155.80,133.40 156.93,128.93 157.95,124.33 158.88,119.70 159.72,115.11 160.49,110.65 161.20,106.40 161.83,102.37 162.35,98.50 162.81,94.76 163.21,91.12 163.60,87.54 164.00,84.00 164.39,80.54 164.74,77.18 165.08,73.89 165.41,70.63 165.75,67.35 166.10,64.00 166.47,60.57 166.84,57.09 167.22,53.58 167.60,50.09 168.00,46.65 168.40,43.30 168.85,39.83 169.34,36.17 169.84,32.56 170.31,29.23 170.71,26.44 171.00,24.40 172.50,19.50 174.00,23.00 175.50,20.50 178.00,21.50 180.00,19.50 186.00,20.00 189.00,21.50 191.40,20.00 193.00,25.00 195.50,22.30 196.50,31.00 198.50,45.70 198.63,47.71 198.79,50.49 198.98,53.79 199.21,57.32 199.49,60.81 199.80,64.00 200.16,66.81 200.58,69.45 201.03,72.06 201.51,74.76 202.00,77.70 202.50,81.00 202.98,84.73 203.44,88.79 203.93,93.07 204.44,97.50 205.03,101.98 205.70,106.40 206.49,110.82 207.37,115.33 208.32,119.89 209.30,124.44 210.27,128.96 211.20,133.40 212.06,137.73 212.88,141.99 213.69,146.20 214.54,150.41 215.46,154.67 216.50,159.00 217.66,163.42 218.91,167.90 220.24,172.41 221.62,176.95 223.05,181.48 224.50,186.00 225.98,190.51 227.52,195.04 229.09,199.56 230.70,204.07 232.34,208.56 234.00,213.00 235.64,217.38 237.27,221.70 238.93,226.00 240.65,230.30 242.50,234.62 244.50,239.00 246.88,243.75 249.63,248.93 252.51,254.12 255.23,258.96 257.55,263.05 259.20,266.00 254.80,266.00 253.07,263.05 250.64,258.96 247.78,254.12 244.75,248.93 241.84,243.75 239.30,239.00 237.12,234.62 235.07,230.30 233.13,226.00 231.27,221.70 229.47,217.38 227.70,213.00 225.97,208.56 224.31,204.07 222.71,199.56 221.16,195.04 219.65,190.51 218.20,186.00 216.78,181.48 215.39,176.95 214.06,172.41 212.79,167.90 211.59,163.42 210.50,159.00 209.54,154.67 208.73,150.41 207.99,146.20 207.27,141.99 206.53,137.73 205.70,133.40 204.75,128.96 203.72,124.44 202.66,119.89 201.61,115.33 200.65,110.82 199.80,106.40 199.10,101.98 198.50,97.50 197.98,93.07 197.49,88.79 197.01,84.73 196.50,81.00 195.95,77.70 195.39,74.76 194.83,72.06 194.30,69.45 193.82,66.81 193.40,64.00 193.10,60.90 192.91,57.58 192.77,54.23 192.61,51.02 192.38,48.12 192.00,45.70 191.41,43.79 190.65,42.24 189.81,41.01 188.99,40.03 188.29,39.24 187.80,38.60 186.00,34.50 183.70,33.90 179.00,36.50 175.40,38.60 175.24,41.46 175.03,45.50 174.77,50.24 174.48,55.21 174.15,59.96 173.80,64.00 173.42,67.22 173.00,69.98 172.54,72.50 172.06,75.02 171.54,77.78 171.00,81.00 170.43,84.73 169.84,88.79 169.21,93.07 168.55,97.50 167.85,101.98 167.10,106.40 166.32,110.82 165.51,115.33 164.66,119.89 163.75,124.44 162.77,128.96 161.70,133.40 160.55,137.73 159.32,141.97 158.02,146.18 156.66,150.39 155.21,154.65 153.70,159.00 152.11,163.47 150.44,168.03 148.70,172.64 146.89,177.26 145.02,181.86 143.10,186.40 141.18,190.89 139.26,195.35 137.28,199.79 135.17,204.21 132.86,208.61 130.30,213.00 127.47,217.36 124.44,221.67 121.21,225.97 117.80,230.28 114.22,234.62 110.50,239.00 106.26,243.75 101.42,248.93 96.41,254.12 91.68,258.96 87.66,263.05 84.80,266.00" fill="#00ffff"/><polyline points="177.00,39.00 178.00,44.00 182.50,38.00 183.00,34.00" fill="none" stroke="#00ffff" stroke-width="1"/><rect x="180" y="32" width="1" height="1" fill="#000"/><rect x="184" y="33" width="1" height="1" fill="#000"/><rect x="194" y="29" width="1" height="1" fill="#000"/><rect x="191" y="40" width="1" height="1" fill="#000"/><polyline points="81.50,266.00 84.26,263.05 88.12,258.96 92.68,254.12 97.49,248.93 102.14,243.75 106.20,239.00 109.72,234.62 113.06,230.28 116.22,225.97 119.26,221.67 122.17,217.36 125.00,213.00 127.74,208.59 130.37,204.16 132.88,199.70 135.28,195.24 137.55,190.81 139.70,186.40 141.70,182.04 143.55,177.73 145.28,173.42 146.91,169.12 148.48,164.78 150.00,160.40 151.47,155.96 152.86,151.47 154.17,146.96 155.43,142.44 156.64,137.91 157.80,133.40 158.93,128.85 160.02,124.23 161.06,119.61 162.03,115.06 162.92,110.63 163.70,106.40 164.34,102.37 164.86,98.50 165.28,94.76 165.67,91.12 166.06,87.54 166.50,84.00 166.99,80.59 167.50,77.34 168.02,74.16 168.53,70.95 169.03,67.59 169.50,64.00 169.95,59.99 170.38,55.61 170.79,51.09 171.20,46.66 171.60,42.55 172.00,39.00 172.42,35.94 172.87,33.18 173.31,30.74 173.71,28.64 174.05,26.92 174.30,25.60 175.50,22.00 178.40,28.60 183.10,22.70 185.50,21.80 186.70,26.20 188.40,28.90 191.40,31.00 193.70,35.70 195.80,41.60 196.40,51.00 196.54,52.43 196.73,54.41 196.96,56.75 197.20,59.26 197.46,61.74 197.70,64.00 197.93,65.93 198.14,67.67 198.37,69.38 198.61,71.22 198.88,73.38 199.20,76.00 199.59,79.38 200.04,83.43 200.53,87.79 201.01,92.08 201.45,95.94 201.80,99.00 202.01,100.91 202.09,101.90 202.13,102.45 202.20,103.06 202.40,104.21 202.80,106.40 203.46,109.79 204.31,114.04 205.29,118.82 206.31,123.85 207.31,128.81 208.20,133.40 208.94,137.60 209.58,141.65 210.19,145.64 210.85,149.64 211.63,153.73 212.60,158.00 213.79,162.48 215.15,167.12 216.63,171.85 218.17,176.61 219.75,181.35 221.30,186.00 222.83,190.57 224.38,195.11 225.95,199.62 227.56,204.11 229.20,208.57 230.90,213.00 232.62,217.38 234.34,221.70 236.11,226.00 237.95,230.30 239.90,234.62 242.00,239.00 244.46,243.75 247.30,248.93 250.24,254.12 253.04,258.96 255.41,263.05 257.10,266.00" fill="none" stroke="#ff0000" stroke-width="1"/><polyline points="167.00,76.00 171.80,82.00 174.50,109.00 175.40,115.50 178.40,92.30 183.00,109.00 185.30,122.40 188.90,90.60 198.00,76.00" fill="none" stroke="#0000ff" stroke-width="1.1"/><rect x="61.5" y="74.5" width="4" height="4" fill="none" stroke="#fff" stroke-width="1" shape-rendering="crispEdges"/></g></svg>
<div class="a" style="left:69px;top:497px;width:457px;height:45px;background:#f0f0f0;"></div>
<div class="t" id="t_start" style="left:70px;top:505.00px;font-size:13px;color:#000;font-family:'Liberation Sans',sans-serif;transform:scaleX(0.7931);transform-origin:0 0;">Start:</div>
<div class="a" style="left:101px;top:500px;width:89px;height:21px;background:#fff;"></div>
<div class="a" style="left:101px;top:500px;width:88px;height:20px;background:#a0a0a0;"></div>
<div class="a" style="left:102px;top:501px;width:87px;height:19px;background:#e3e3e3;"></div>
<div class="a" style="left:102px;top:501px;width:86px;height:18px;background:#696969;"></div>
<div class="a" style="left:103px;top:502px;width:85px;height:17px;background:#fff;"></div>
<div class="t" id="t_1mhz" style="left:104px;top:503.00px;font-size:13px;color:#000;font-family:'Liberation Sans',sans-serif;transform:scaleX(0.8750);transform-origin:0 0;">1MHz</div>
<div class="a" style="left:261px;top:498px;width:73px;height:20px;background:#fff;"></div>
<div class="a" style="left:261px;top:498px;width:72px;height:19px;background:#a0a0a0;"></div>
<div class="a" style="left:262px;top:499px;width:71px;height:18px;background:#e3e3e3;"></div>
<div class="a" style="left:262px;top:499px;width:70px;height:17px;background:#696969;"></div>
<div class="a" style="left:263px;top:500px;width:69px;height:16px;background:#fff;"></div>
<div class="t" id="t_101" style="left:265px;top:501.00px;font-size:13px;color:#000;font-family:'Liberation Sans',sans-serif;transform:scaleX(0.8136);transform-origin:0 0;">101 points</div>
<div class="t" id="t_stop" style="left:393px;top:505.00px;font-size:13px;color:#000;font-family:'Liberation Sans',sans-serif;transform:scaleX(0.8214);transform-origin:0 0;">Stop:</div>
<div class="a" style="left:424px;top:500px;width:89px;height:21px;background:#fff;"></div>
<div class="a" style="left:424px;top:500px;width:88px;height:20px;background:#a0a0a0;"></div>
<div class="a" style="left:425px;top:501px;width:87px;height:19px;background:#e3e3e3;"></div>
<div class="a" style="left:425px;top:501px;width:86px;height:18px;background:#696969;"></div>
<div class="a" style="left:426px;top:502px;width:85px;height:17px;background:#fff;"></div>
<div class="t" id="t_10mhz" style="left:427px;top:503.00px;font-size:13px;color:#000;font-family:'Liberation Sans',sans-serif;transform:scaleX(0.8500);transform-origin:0 0;">10MHz</div>
<div class="a" style="left:77px;top:523px;width:82px;height:18px;background:#fff;"></div>
<div class="a" style="left:77px;top:523px;width:81px;height:17px;background:#a0a0a0;"></div>
<div class="a" style="left:78px;top:524px;width:80px;height:16px;background:#f0f0f0;"></div>
<div class="t" id="t_f" style="left:79px;top:525.00px;font-size:13px;color:#000;font-family:'Liberation Sans',sans-serif;transform:scaleX(0.8286);transform-origin:0 0;">f=1.549MHz</div>
<div class="a" style="left:165px;top:523px;width:81px;height:18px;background:#fff;"></div>
<div class="a" style="left:165px;top:523px;width:80px;height:17px;background:#a0a0a0;"></div>
<div class="a" style="left:166px;top:524px;width:79px;height:16px;background:#f0f0f0;"></div>
<svg class="a" style="left:169px;top:527px" width="10" height="10"><circle cx="4.5" cy="4.5" r="4" fill="#f00" stroke="#000" stroke-width="1"/></svg>
<div class="t" id="t_s1" style="left:182px;top:525.00px;font-size:13px;color:#000;font-family:'Liberation Sans',sans-serif;transform:scaleX(0.9091);transform-origin:0 0;">-53.5dB</div>
<div class="a" style="left:253px;top:523px;width:82px;height:18px;background:#fff;"></div>
<div class="a" style="left:253px;top:523px;width:81px;height:17px;background:#a0a0a0;"></div>
<div class="a" style="left:254px;top:524px;width:80px;height:16px;background:#f0f0f0;"></div>
<svg class="a" style="left:257px;top:527px" width="10" height="10"><circle cx="4.5" cy="4.5" r="4" fill="#00f" stroke="#000" stroke-width="1"/></svg>
<div class="t" id="t_s2" style="left:270px;top:525.00px;font-size:13px;color:#000;font-family:'Liberation Sans',sans-serif;transform:scaleX(0.7917);transform-origin:0 0;">-643ndB</div>
<div class="a" style="left:358px;top:522px;width:129px;height:18px;background-color:#f0f0f0;background-image:linear-gradient(45deg,#fff 25%,transparent 25%,transparent 75%,#fff 75%),linear-gradient(45deg,#fff 25%,transparent 25%,transparent 75%,#fff 75%);background-size:2px 2px;background-position:0 0,1px 1px;"></div>
<div class="a" style="left:340px;top:522px;width:18px;height:18px;background:#696969;"></div>
<div class="a" style="left:340px;top:522px;width:17px;height:17px;background:#fff;"></div>
<div class="a" style="left:341px;top:523px;width:16px;height:16px;background:#a0a0a0;"></div>
<div class="a" style="left:341px;top:523px;width:15px;height:15px;background:#f0f0f0;"></div>
<svg class="a" style="left:346px;top:527px" width="5" height="9" shape-rendering="crispEdges"><path d="M4 0 V9 H3 V8 H2 V7 H1 V6 H0 V3 H1 V2 H2 V1 H3 V0 Z" fill="#000"/></svg>
<div class="a" style="left:487px;top:522px;width:18px;height:18px;background:#696969;"></div>
<div class="a" style="left:487px;top:522px;width:17px;height:17px;background:#fff;"></div>
<div class="a" style="left:488px;top:523px;width:16px;height:16px;background:#a0a0a0;"></div>
<div class="a" style="left:488px;top:523px;width:15px;height:15px;background:#f0f0f0;"></div>
<svg class="a" style="left:494px;top:527px" width="5" height="9" shape-rendering="crispEdges"><path d="M0 0 V9 H1 V8 H2 V7 H3 V6 H4 V3 H3 V2 H2 V1 H1 V0 Z" fill="#000"/></svg>
<div class="a" style="left:379px;top:522px;width:18px;height:18px;background:#696969;"></div>
<div class="a" style="left:379px;top:522px;width:17px;height:17px;background:#fff;"></div>
<div class="a" style="left:380px;top:523px;width:16px;height:16px;background:#a0a0a0;"></div>
<div class="a" style="left:380px;top:523px;width:15px;height:15px;background:#f0f0f0;"></div>
<div class="a" style="left:381px;top:524px;width:14px;height:14px;background-color:#000;background-image:linear-gradient(45deg,#c0c0c0 25%,transparent 25%,transparent 75%,#c0c0c0 75%),linear-gradient(45deg,#c0c0c0 25%,transparent 25%,transparent 75%,#c0c0c0 75%);background-size:2px 2px;background-position:0 0,1px 1px;"></div>
<div class="a" style="left:517px;top:526px;width:9px;height:16px;background:#bcbcbc;"></div>
<svg class="a" style="left:517px;top:526px" width="9" height="16"><path d="M1.5 13.5 L9.5 5.5 M5.5 13.5 L9.5 9.5" stroke="#fff" stroke-width="1.2"/><path d="M2.5 14.5 L9.5 7.5 M6.5 14.5 L9.5 11.5" stroke="#777" stroke-width="1.2"/></svg>
</div>
</body></html>
